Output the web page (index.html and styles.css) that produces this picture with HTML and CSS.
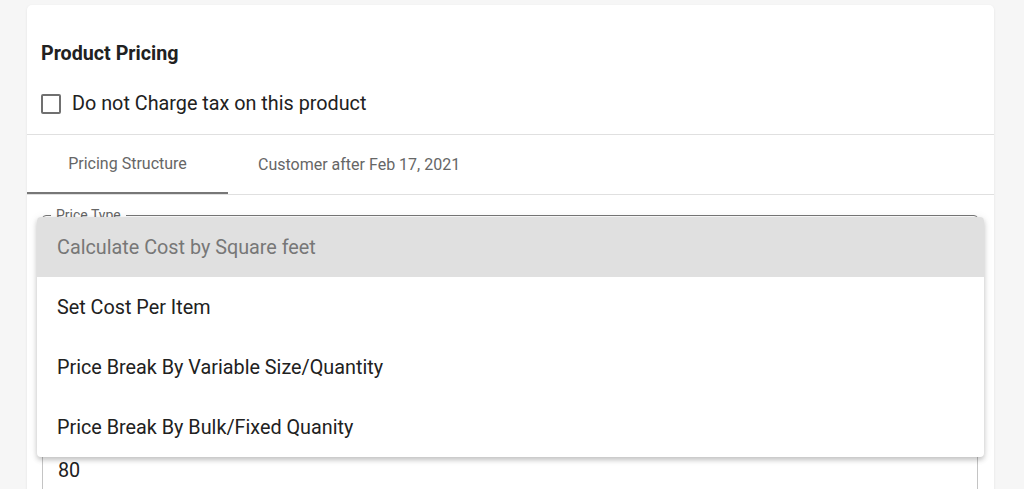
FILE: index.html
```html
<!DOCTYPE html>
<html lang="en">
<head>
    <meta charset="UTF-8">
    <meta name="viewport" content="width=device-width, initial-scale=1.0">
    <title>Product Pricing</title>
    <link rel="stylesheet" href="styles.css">
</head>
<body>
    <div class="page">
        <div class="card">
            <div class="card-head">
                <h3 class="card-title">Product Pricing</h3>
                <label class="check-row">
                    <span class="check-box"></span>
                    <span>Do not Charge tax on this product</span>
                </label>
            </div>

            <div class="tabs">
                <div class="tab active">Pricing Structure</div>
                <div class="tab">Customer after Feb 17, 2021</div>
            </div>

            <div class="tab-body">
                <div class="field select-field">
                    <span class="field-label">Price Type</span>
                </div>
                <div class="field">
                    <span class="field-value">80</span>
                </div>

                <!-- open dropdown of Price Type -->
                <ul class="menu">
                    <li class="menu-item selected">Calculate Cost by Square feet</li>
                    <li class="menu-item">Set Cost Per Item</li>
                    <li class="menu-item">Price Break By Variable Size/Quantity</li>
                    <li class="menu-item">Price Break By Bulk/Fixed Quanity</li>
                </ul>
            </div>
        </div>
    </div>
</body>
</html>
```

FILE: styles.css
```css
body {
    margin: 0;
    background-color: #f6f6f6;
    font-family: Roboto, "Liberation Sans", sans-serif;
    color: #212121;
    overflow: hidden;
}
.page {
    padding: 5px 30px 0 27px;
}
.card {
    background-color: #fff;
    border-radius: 5px;
    box-shadow: 0 1px 3px rgba(0, 0, 0, 0.08);
    height: 600px;
}
.card-head {
    padding: 0 14px;
    height: 129px;
    border-bottom: 1px solid #e0e0e0;
    display: flex;
    flex-direction: column;
}
.card-title {
    margin: 0;
    padding-top: 37px;
    font-size: 19.7px;
    font-weight: 700;
    line-height: 24px;
}
.check-row {
    display: flex;
    align-items: center;
    gap: 11px;
    margin-top: 26px;
    font-size: 19.8px;
    line-height: 24px;
}
.check-box {
    width: 16px;
    height: 16px;
    border: 2px solid #707070;
    border-radius: 2px;
}
.tabs {
    display: flex;
    height: 59px;
    border-bottom: 1px solid #e0e0e0;
}
.tab {
    font-size: 16px;
    color: #666;
    display: flex;
    align-items: center;
    justify-content: center;
    padding: 0 30px 0;
    box-sizing: border-box;
}
.tab.active {
    width: 201px;
    border-bottom: 2px solid #777;
}
.tab-body {
    position: relative;
    padding: 20px 16px 0 15px;
}
.field {
    height: 56px;
    border: 1px solid #c4c4c4;
    border-radius: 4px;
    display: flex;
    align-items: center;
    padding: 0 14px;
    margin-bottom: 16px;
    font-size: 19.8px;
}
.select-field {
    border-color: #777;
    height: 208px;
    position: relative;
}
.field-label {
    position: absolute;
    top: -9px;
    left: 8px;
    padding: 0 5px;
    background-color: #fff;
    font-size: 14px;
    color: #666;
}
.field-value {
    padding-left: 1px;
}
.menu {
    position: absolute;
    top: 22px;
    left: 10px;
    width: 947px;
    margin: 0;
    padding: 0;
    list-style-type: none;
    background-color: #fff;
    border-radius: 4px;
    box-shadow: 0 3px 5px rgba(0, 0, 0, 0.2), 0 1px 10px rgba(0, 0, 0, 0.08);
    overflow: hidden;
}
.menu-item {
    height: 60px;
    display: flex;
    align-items: center;
    padding: 0 20px;
    font-size: 19.8px;
    color: #212121;
}
.menu-item.selected {
    background-color: #e0e0e0;
    color: #777;
}
```
